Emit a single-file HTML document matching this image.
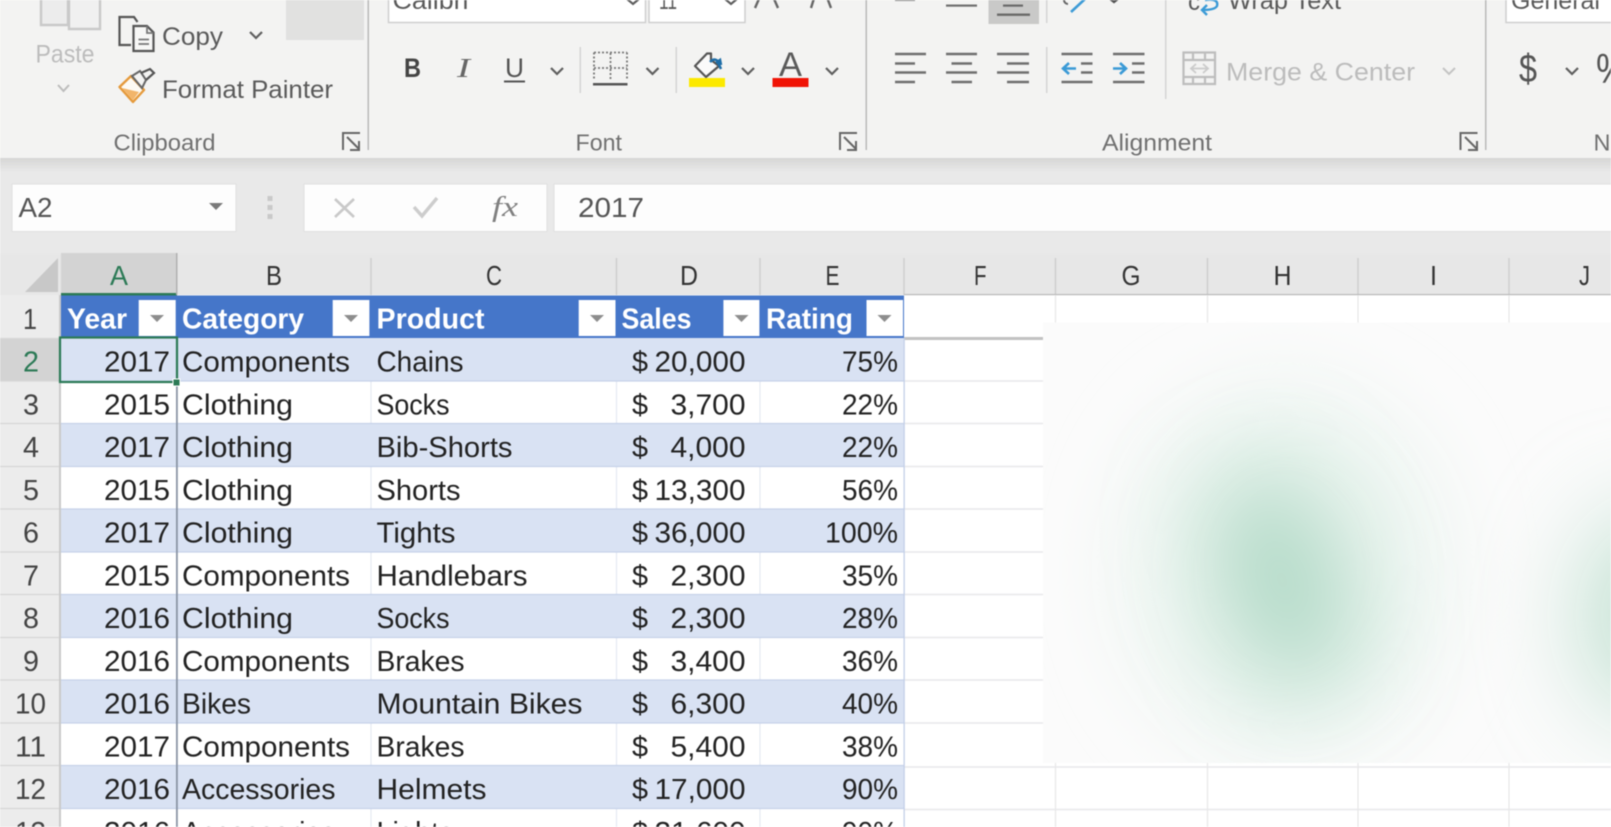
<!DOCTYPE html>
<html><head><meta charset="utf-8"><title>Excel table</title>
<style>
html,body{margin:0;padding:0;width:1611px;height:827px;overflow:hidden;background:#fff}
svg{display:block;filter:blur(.45px)}
text{font-family:"Liberation Sans",sans-serif;white-space:pre}
.c{font-size:29px;fill:#222}
.h{font-size:29px;fill:#fff;font-weight:700}
.n{font-size:28px;fill:#333}
.l{font-size:28px;fill:#333}
.r{font-size:25px;fill:#5a5a5a}
.g{font-size:23.5px;fill:#707070}
.d{font-size:25px;fill:#bcbcbc}
.ch{fill:none;stroke:#5f5f5f;stroke-width:2.2}
.ln{stroke:#6f6f6f;stroke-width:2.4}
</style></head><body>
<svg width="1611" height="827" viewBox="0 0 1611 827" xmlns="http://www.w3.org/2000/svg">
<defs>
<linearGradient id="sh" x1="0" y1="0" x2="0" y2="1"><stop offset="0" stop-color="#d6d6d5"/><stop offset="1" stop-color="#e9e9e9"/></linearGradient>
<filter id="bl1" x="-100%" y="-100%" width="300%" height="300%"><feGaussianBlur stdDeviation="48"/></filter>
<filter id="bl2" x="-100%" y="-100%" width="300%" height="300%"><feGaussianBlur stdDeviation="38"/></filter>
</defs>

<!-- ribbon -->
<rect width="1611" height="158" fill="#f3f3f2"/>
<rect y="158" width="1611" height="14" fill="url(#sh)"/>
<rect y="172" width="1611" height="82" fill="#e9e9e9"/>

<!-- paste -->
<path d="M41 0V25H68V0" fill="#ececec" stroke="#c9c9c9" stroke-width="2.4"/>
<path d="M69 0V29H100V0" fill="#f0f0f0" stroke="#c9c9c9" stroke-width="2.4"/>
<text x="35.500" y="62.500" class="d" textLength="59" lengthAdjust="spacingAndGlyphs">Paste</text>
<path d="M58 85l5.500 6 5.500-6" fill="none" stroke="#bcbcbc" stroke-width="2"/>

<!-- copy -->
<path d="M131 45H119.500V17H134l3.500 5" fill="none" stroke="#555" stroke-width="2.200"/>
<path d="M133.500 26V51H153.500V32.500L147 26Z" fill="#f7f7f6" stroke="#555" stroke-width="2.200"/>
<path d="M147 26V33H153.500M138.500 39.500H149M138.500 44H149" fill="none" stroke="#777" stroke-width="1.800"/>
<text x="162" y="45" class="r" textLength="61" lengthAdjust="spacingAndGlyphs">Copy</text>
<path class="ch" d="M250 32l6 6 6-6"/>
<rect x="286" width="78" height="40" fill="#e1e1e0"/>

<!-- format painter -->
<path d="M119.500 87L131 76L144 90L133 102Z" fill="#fdfaf3" stroke="#e59a3c" stroke-width="2.400" stroke-linejoin="round"/>
<path d="M122 88L139 92L133 100Z" fill="#f2b56a"/>
<path d="M132 76L140 71L146 80L142 88Z" fill="#f3f3f2" stroke="#666" stroke-width="2"/>
<path d="M141 73L150 69L154 73L146 80" fill="none" stroke="#555" stroke-width="2.200"/>
<text x="162" y="98" class="r" textLength="171" lengthAdjust="spacingAndGlyphs">Format Painter</text>
<text x="113.500" y="150.500" class="g" textLength="102" lengthAdjust="spacingAndGlyphs">Clipboard</text>
<path d="M343 150V133H360M347 137L359 149M359 141V150H350" fill="none" stroke="#666" stroke-width="2"/>
<rect x="367.500" width="1.500" height="150" fill="#b9b9b9"/>

<!-- font group -->
<rect x="388.500" y="-2" width="257" height="24.500" fill="#fff" stroke="#cfcfcf" stroke-width="1.500"/>
<rect x="649" y="-2" width="96" height="24.500" fill="#fff" stroke="#cfcfcf" stroke-width="1.500"/>
<text x="392.500" y="9" class="r" textLength="76" lengthAdjust="spacingAndGlyphs">Calibri</text>
<text x="659" y="9" class="r" textLength="18" lengthAdjust="spacingAndGlyphs">11</text>
<path class="ch" d="M627 -1l6 5 6-5M725 -1l6 5 6-5"/>
<path d="M755 8L762 -8M771 -8L778 8M811 8L816 -8M825 -8L831 8" fill="none" stroke="#666" stroke-width="2.400"/>
<text x="404" y="77" style="font-size:27px;font-weight:700;fill:#444" textLength="17" lengthAdjust="spacingAndGlyphs">B</text>
<text x="457" y="77" style="font-size:27px;font-style:italic;font-family:'Liberation Serif',serif;fill:#666" textLength="13" lengthAdjust="spacingAndGlyphs">I</text>
<text x="505" y="77" style="font-size:27px;fill:#555" textLength="19" lengthAdjust="spacingAndGlyphs">U</text>
<rect x="504" y="80.500" width="21" height="2" fill="#555"/>
<path class="ch" d="M551 68l6 6 6-6M646.500 68l6 6 6-6M742 68l6 6 6-6M826 68l6 6 6-6"/>
<rect x="579.500" y="47" width="1.500" height="46" fill="#d4d4d4"/>
<rect x="675.500" y="47" width="1.500" height="46" fill="#d4d4d4"/>
<!-- borders -->
<path d="M594 52.500H627M594 52.500V80M627 52.500V80M610.500 53V80M594 68H627" fill="none" stroke="#777" stroke-width="1.800" stroke-dasharray="2 2"/>
<rect x="593" y="83" width="34.500" height="2.500" fill="#555"/>
<!-- fill colour -->
<path d="M695 66L707 53.500L711 53.500L711 60L719 66L706 77Z" fill="#fafafa" stroke="#555" stroke-width="2.200" stroke-linejoin="round"/>
<path d="M710 62Q714 58 717 60.500L721 69M716 63l4 -3 1 5" fill="none" stroke="#1f6ea8" stroke-width="2.600"/>
<rect x="689" y="78" width="36" height="9" fill="#fce900"/>
<text x="779" y="76" style="font-size:34px;fill:#5a5a5a" textLength="23" lengthAdjust="spacingAndGlyphs">A</text>
<rect x="772.500" y="78" width="36" height="9" fill="#f01305"/>
<text x="575.500" y="150.500" class="g" textLength="46.500" lengthAdjust="spacingAndGlyphs">Font</text>
<path d="M840 150V133H857M844 137L856 149M856 141V150H847" fill="none" stroke="#666" stroke-width="2"/>
<rect x="865.500" width="1.500" height="150" fill="#b9b9b9"/>

<!-- alignment top -->
<rect x="895" y="-1" width="20" height="2" fill="#888"/>
<rect x="946" y="4.500" width="31" height="2.200" fill="#6f6f6f"/>
<rect x="988.500" y="-2" width="50.500" height="26" fill="#c9c9c8"/>
<rect x="1003" y="4.500" width="20" height="2.200" fill="#6a6a6a"/>
<rect x="997" y="13.500" width="33" height="2.400" fill="#6a6a6a"/>
<rect x="1046" y="0" width="1.500" height="23" fill="#d4d4d4"/>
<path d="M1071 12L1085 -1" stroke="#3d9bd6" stroke-width="2.600" fill="none"/>
<path d="M1064 0a4 4 0 0 0 4 4" stroke="#666" stroke-width="2" fill="none"/>
<path d="M1109 -2l5 4 5-4" fill="none" stroke="#555" stroke-width="2.400"/>

<!-- align lines -->
<path class="ln" d="M895 54H926M895 63.500H915M895 72.500H926M895 82H915M946 54H977M951.500 63.500H972M946 72.500H977M951.500 82H972M997 54H1029M1007 63.500H1029M997 72.500H1029M1007 82H1029"/>
<rect x="1046" y="47" width="1.500" height="46" fill="#d4d4d4"/>
<path class="ln" d="M1061.500 54H1092.500M1081 63.500H1092.500M1081 72.500H1092.500M1061.500 82H1092.500M1113 54H1144.500M1132 63.500H1144.500M1132 72.500H1144.500M1113 82H1144.500"/>
<path d="M1076 68.500H1063M1069 63l-6 5.500 6 5.500M1113 68.500H1126M1120 63l6 5.500-6 5.500" fill="none" stroke="#3a9ad6" stroke-width="2.600"/>
<rect x="1165" width="1.500" height="99" fill="#d4d4d4"/>
<text x="1188" y="10" class="r" textLength="12" lengthAdjust="spacingAndGlyphs">c</text>
<path d="M1205 0Q1219 -2 1217 6Q1215 10 1202 10M1207 5l-5 5 5 5" fill="none" stroke="#3a9ad6" stroke-width="2.400"/>
<text x="1228" y="9" class="r" textLength="113" lengthAdjust="spacingAndGlyphs">Wrap Text</text>
<!-- merge -->
<path d="M1183.500 52.500H1215V84H1183.500ZM1184 60H1215M1184 77H1215M1193 53V60M1205 53V60M1193 77V84M1205 77V84" fill="none" stroke="#bdbdbd" stroke-width="2.200"/>
<path d="M1192 68.500H1207M1196 64l-5 4.500 5 4.500M1203 64l5 4.500-5 4.500" fill="none" stroke="#cbcbcb" stroke-width="1.800"/>
<text x="1226" y="80.500" class="d" textLength="189" lengthAdjust="spacingAndGlyphs">Merge &amp; Center</text>
<path d="M1443 68l6 6 6-6" fill="none" stroke="#c4c4c4" stroke-width="2"/>
<text x="1102" y="150.500" class="g" textLength="110" lengthAdjust="spacingAndGlyphs">Alignment</text>
<path d="M1460.500 150V133H1477.500M1465 137L1477 149M1477 141V150H1468" fill="none" stroke="#666" stroke-width="2"/>
<rect x="1485" width="1.500" height="150" fill="#b9b9b9"/>

<!-- number group -->
<rect x="1506" y="-2" width="110" height="24.500" fill="#fff" stroke="#cfcfcf" stroke-width="1.500"/>
<text x="1511" y="9" class="r" textLength="89" lengthAdjust="spacingAndGlyphs">General</text>
<text x="1519" y="82" style="font-size:40px;fill:#555" textLength="18" lengthAdjust="spacingAndGlyphs">$</text>
<path class="ch" d="M1566 68l6 6 6-6"/>
<text x="1596" y="83" style="font-size:42px;fill:#555" textLength="32" lengthAdjust="spacingAndGlyphs">%</text>
<text x="1593.500" y="150.500" class="g">N</text>

<!-- formula bar -->
<rect x="12" y="184" width="224" height="47.500" fill="#fdfdfd" stroke="#e0e0e0"/>
<text x="18.500" y="217" class="l" style="fill:#555" textLength="34" lengthAdjust="spacingAndGlyphs">A2</text>
<path d="M209 203H223L216 210Z" fill="#7a7a7a"/>
<rect x="267.500" y="196" width="5" height="5" fill="#c9c9c9"/><rect x="267.500" y="205" width="5" height="5" fill="#c9c9c9"/><rect x="267.500" y="214" width="5" height="5" fill="#c9c9c9"/>
<rect x="304" y="184" width="243" height="47.500" fill="#fdfdfd" stroke="#e0e0e0"/>
<path d="M335 199L354 217M354 199L335 217" stroke="#c9c9c9" stroke-width="2.600" fill="none"/>
<path d="M414 207L422 216L437 198" stroke="#cdcdcd" stroke-width="3.400" fill="none"/>
<text x="492" y="216" style="font-size:29px;font-style:italic;font-family:'Liberation Serif',serif;fill:#808080" textLength="26" lengthAdjust="spacingAndGlyphs">fx</text>
<rect x="554" y="184" width="1070" height="47.500" fill="#fdfdfd" stroke="#e0e0e0"/>
<text x="578" y="217" class="l" style="fill:#555" textLength="66" lengthAdjust="spacingAndGlyphs">2017</text>

<!-- col headers -->
<rect y="254" width="1611" height="41" fill="#e7e7e7"/>
<path d="M25 292H58V258Z" fill="#c8c8c8"/>
<rect x="61" y="253" width="116" height="41" fill="#d3d3d3"/>
<rect x="61" y="293" width="116" height="2.500" fill="#2c7a56"/>
<path d="M371 258V295M616.500 258V295M760 258V295M904 258V295M1055.500 258V295M1207.500 258V295M1358 258V295M1509 258V295" stroke="#cbcbcb" stroke-width="1.300" fill="none"/>
<rect x="176" y="253" width="1.500" height="42" fill="#b0b0b0"/>
<rect y="294" x="904" width="707" height="1.200" fill="#b8b8b8"/>
<text x="110" y="285" class="n" style="fill:#2c7a56" textLength="18" lengthAdjust="spacingAndGlyphs">A</text>
<text x="266" y="285" class="n" textLength="16" lengthAdjust="spacingAndGlyphs">B</text>
<text x="486" y="285" class="n" textLength="16" lengthAdjust="spacingAndGlyphs">C</text>
<text x="680" y="285" class="n" textLength="18" lengthAdjust="spacingAndGlyphs">D</text>
<text x="825.500" y="285" class="n" textLength="14" lengthAdjust="spacingAndGlyphs">E</text>
<text x="974" y="285" class="n" textLength="12.500" lengthAdjust="spacingAndGlyphs">F</text>
<text x="1121.500" y="285" class="n" textLength="19" lengthAdjust="spacingAndGlyphs">G</text>
<text x="1273.500" y="285" class="n" textLength="18" lengthAdjust="spacingAndGlyphs">H</text>
<text x="1430" y="285" class="n" textLength="7" lengthAdjust="spacingAndGlyphs">I</text>
<text x="1579" y="285" class="n" textLength="11" lengthAdjust="spacingAndGlyphs">J</text>

<!-- row headers -->
<rect y="295" width="61" height="532" fill="#ececec"/>
<rect y="338" width="61" height="43" fill="#d3d3d3"/>
<path d="M0 338.500H61M0 381H61M0 423.500H61M0 466.500H61M0 509H61M0 552H61M0 594.500H61M0 637.500H61M0 680H61M0 723H61M0 765.500H61M0 808.500H61" stroke="#d6d6d6" stroke-width="1.300"/>
<rect x="59" y="295" width="2" height="532" fill="#cacaca"/>
<g class="c" style="fill:#444">
<text x="23" y="329" textLength="14" lengthAdjust="spacingAndGlyphs">1</text>
<text x="23" y="371.500" style="fill:#2c7a56" textLength="16" lengthAdjust="spacingAndGlyphs">2</text>
<text x="23" y="414.250" textLength="16" lengthAdjust="spacingAndGlyphs">3</text>
<text x="23" y="457" textLength="16" lengthAdjust="spacingAndGlyphs">4</text>
<text x="23" y="499.750" textLength="16" lengthAdjust="spacingAndGlyphs">5</text>
<text x="23" y="542.500" textLength="16" lengthAdjust="spacingAndGlyphs">6</text>
<text x="23" y="585.250" textLength="16" lengthAdjust="spacingAndGlyphs">7</text>
<text x="23" y="628" textLength="16" lengthAdjust="spacingAndGlyphs">8</text>
<text x="23" y="670.750" textLength="16" lengthAdjust="spacingAndGlyphs">9</text>
<text x="15" y="713.500" textLength="31" lengthAdjust="spacingAndGlyphs">10</text>
<text x="15" y="756.250" textLength="31" lengthAdjust="spacingAndGlyphs">11</text>
<text x="15" y="799" textLength="31" lengthAdjust="spacingAndGlyphs">12</text>
<text x="15" y="841.750" textLength="31" lengthAdjust="spacingAndGlyphs">13</text>
</g>

<!-- grid -->
<path d="M371 338V827M616.500 338V827M760 338V827" stroke="#e6eaf3" stroke-width="1.300"/>
<path d="M1055.500 295V827M1207.500 295V827M1358 295V827M1509 295V827" stroke="#e8e8e8" stroke-width="1.300"/>
<path d="M904 381H1611M904 423.500H1611M904 466.500H1611M904 509H1611M904 552H1611M904 594.500H1611M904 637.500H1611M904 680H1611M904 723H1611M904 767H1611M904 809.500H1611" stroke="#e8e8ea" stroke-width="1.500"/>
<rect x="904" y="337" width="707" height="3" fill="#c2c2c2"/>

<!-- table bands -->
<g fill="#d9e2f3">
<rect x="61" y="338" width="843" height="42.750"/>
<rect x="61" y="423.500" width="843" height="42.750"/>
<rect x="61" y="509" width="843" height="42.750"/>
<rect x="61" y="594.500" width="843" height="42.750"/>
<rect x="61" y="680" width="843" height="42.750"/>
<rect x="61" y="765.500" width="843" height="42.750"/>
</g>
<path d="M61 381H904M61 423.500H904M61 466.500H904M61 509H904M61 552H904M61 594.500H904M61 637.500H904M61 680H904M61 723H904M61 765.500H904M61 808.500H904" stroke="#c6d2e9" stroke-width="1.300"/>
<rect x="61" y="295.500" width="843" height="42.500" fill="#4576c9"/>
<rect x="903.500" y="338" width="1.300" height="489" fill="#c3cfe8"/>
<rect x="176" y="338" width="1.800" height="489" fill="#8b95a5"/>

<!-- header -->
<text x="67" y="328.500" class="h" textLength="60" lengthAdjust="spacingAndGlyphs">Year</text>
<text x="182" y="328.500" class="h" textLength="122" lengthAdjust="spacingAndGlyphs">Category</text>
<text x="376.500" y="328.500" class="h" textLength="108" lengthAdjust="spacingAndGlyphs">Product</text>
<text x="621.500" y="328.500" class="h" textLength="70" lengthAdjust="spacingAndGlyphs">Sales</text>
<text x="766" y="328.500" class="h" textLength="87" lengthAdjust="spacingAndGlyphs">Rating</text>
<g fill="#fff">
<rect x="138.700" y="300" width="37" height="36"/><rect x="332.700" y="300" width="36.700" height="36"/><rect x="578.700" y="300" width="36.800" height="36"/><rect x="723.400" y="300" width="36" height="36"/><rect x="866.500" y="300" width="36.500" height="36"/>
</g>
<g fill="#8d8d8d">
<path d="M150 315H164L157 322Z"/><path d="M344 315H358L351 322Z"/><path d="M590 315H604L597 322Z"/><path d="M734.500 315H748.500L741.500 322Z"/><path d="M877.500 315H891.500L884.500 322Z"/>
</g>

<!-- cells -->
<g class="c">
<text x="104" y="371.500" textLength="66" lengthAdjust="spacingAndGlyphs">2017</text><text x="182" y="371.500" textLength="168" lengthAdjust="spacingAndGlyphs">Components</text><text x="376.500" y="371.500" textLength="87" lengthAdjust="spacingAndGlyphs">Chains</text><text x="632" y="371.500" textLength="16" lengthAdjust="spacingAndGlyphs">$</text><text x="654.500" y="371.500" textLength="91" lengthAdjust="spacingAndGlyphs">20,000</text><text x="842" y="371.500" textLength="56" lengthAdjust="spacingAndGlyphs">75%</text>
<text x="104" y="414.250" textLength="66" lengthAdjust="spacingAndGlyphs">2015</text><text x="182" y="414.250" textLength="111" lengthAdjust="spacingAndGlyphs">Clothing</text><text x="376.500" y="414.250" textLength="73" lengthAdjust="spacingAndGlyphs">Socks</text><text x="632" y="414.250" textLength="16" lengthAdjust="spacingAndGlyphs">$</text><text x="670.500" y="414.250" textLength="75" lengthAdjust="spacingAndGlyphs">3,700</text><text x="842" y="414.250" textLength="56" lengthAdjust="spacingAndGlyphs">22%</text>
<text x="104" y="457" textLength="66" lengthAdjust="spacingAndGlyphs">2017</text><text x="182" y="457" textLength="111" lengthAdjust="spacingAndGlyphs">Clothing</text><text x="376.500" y="457" textLength="136" lengthAdjust="spacingAndGlyphs">Bib-Shorts</text><text x="632" y="457" textLength="16" lengthAdjust="spacingAndGlyphs">$</text><text x="670.500" y="457" textLength="75" lengthAdjust="spacingAndGlyphs">4,000</text><text x="842" y="457" textLength="56" lengthAdjust="spacingAndGlyphs">22%</text>
<text x="104" y="499.750" textLength="66" lengthAdjust="spacingAndGlyphs">2015</text><text x="182" y="499.750" textLength="111" lengthAdjust="spacingAndGlyphs">Clothing</text><text x="376.500" y="499.750" textLength="84" lengthAdjust="spacingAndGlyphs">Shorts</text><text x="632" y="499.750" textLength="16" lengthAdjust="spacingAndGlyphs">$</text><text x="654.500" y="499.750" textLength="91" lengthAdjust="spacingAndGlyphs">13,300</text><text x="842" y="499.750" textLength="56" lengthAdjust="spacingAndGlyphs">56%</text>
<text x="104" y="542.500" textLength="66" lengthAdjust="spacingAndGlyphs">2017</text><text x="182" y="542.500" textLength="111" lengthAdjust="spacingAndGlyphs">Clothing</text><text x="376.500" y="542.500" textLength="79" lengthAdjust="spacingAndGlyphs">Tights</text><text x="632" y="542.500" textLength="16" lengthAdjust="spacingAndGlyphs">$</text><text x="654.500" y="542.500" textLength="91" lengthAdjust="spacingAndGlyphs">36,000</text><text x="825" y="542.500" textLength="73" lengthAdjust="spacingAndGlyphs">100%</text>
<text x="104" y="585.250" textLength="66" lengthAdjust="spacingAndGlyphs">2015</text><text x="182" y="585.250" textLength="168" lengthAdjust="spacingAndGlyphs">Components</text><text x="376.500" y="585.250" textLength="151" lengthAdjust="spacingAndGlyphs">Handlebars</text><text x="632" y="585.250" textLength="16" lengthAdjust="spacingAndGlyphs">$</text><text x="670.500" y="585.250" textLength="75" lengthAdjust="spacingAndGlyphs">2,300</text><text x="842" y="585.250" textLength="56" lengthAdjust="spacingAndGlyphs">35%</text>
<text x="104" y="628" textLength="66" lengthAdjust="spacingAndGlyphs">2016</text><text x="182" y="628" textLength="111" lengthAdjust="spacingAndGlyphs">Clothing</text><text x="376.500" y="628" textLength="73" lengthAdjust="spacingAndGlyphs">Socks</text><text x="632" y="628" textLength="16" lengthAdjust="spacingAndGlyphs">$</text><text x="670.500" y="628" textLength="75" lengthAdjust="spacingAndGlyphs">2,300</text><text x="842" y="628" textLength="56" lengthAdjust="spacingAndGlyphs">28%</text>
<text x="104" y="670.750" textLength="66" lengthAdjust="spacingAndGlyphs">2016</text><text x="182" y="670.750" textLength="168" lengthAdjust="spacingAndGlyphs">Components</text><text x="376.500" y="670.750" textLength="88" lengthAdjust="spacingAndGlyphs">Brakes</text><text x="632" y="670.750" textLength="16" lengthAdjust="spacingAndGlyphs">$</text><text x="670.500" y="670.750" textLength="75" lengthAdjust="spacingAndGlyphs">3,400</text><text x="842" y="670.750" textLength="56" lengthAdjust="spacingAndGlyphs">36%</text>
<text x="104" y="713.500" textLength="66" lengthAdjust="spacingAndGlyphs">2016</text><text x="182" y="713.500" textLength="69" lengthAdjust="spacingAndGlyphs">Bikes</text><text x="376.500" y="713.500" textLength="206" lengthAdjust="spacingAndGlyphs">Mountain Bikes</text><text x="632" y="713.500" textLength="16" lengthAdjust="spacingAndGlyphs">$</text><text x="670.500" y="713.500" textLength="75" lengthAdjust="spacingAndGlyphs">6,300</text><text x="842" y="713.500" textLength="56" lengthAdjust="spacingAndGlyphs">40%</text>
<text x="104" y="756.250" textLength="66" lengthAdjust="spacingAndGlyphs">2017</text><text x="182" y="756.250" textLength="168" lengthAdjust="spacingAndGlyphs">Components</text><text x="376.500" y="756.250" textLength="88" lengthAdjust="spacingAndGlyphs">Brakes</text><text x="632" y="756.250" textLength="16" lengthAdjust="spacingAndGlyphs">$</text><text x="670.500" y="756.250" textLength="75" lengthAdjust="spacingAndGlyphs">5,400</text><text x="842" y="756.250" textLength="56" lengthAdjust="spacingAndGlyphs">38%</text>
<text x="104" y="799" textLength="66" lengthAdjust="spacingAndGlyphs">2016</text><text x="182" y="799" textLength="153.500" lengthAdjust="spacingAndGlyphs">Accessories</text><text x="376.500" y="799" textLength="110" lengthAdjust="spacingAndGlyphs">Helmets</text><text x="632" y="799" textLength="16" lengthAdjust="spacingAndGlyphs">$</text><text x="654.500" y="799" textLength="91" lengthAdjust="spacingAndGlyphs">17,000</text><text x="842" y="799" textLength="56" lengthAdjust="spacingAndGlyphs">90%</text>
<text x="104" y="841.750" textLength="66" lengthAdjust="spacingAndGlyphs">2016</text><text x="182" y="841.750" textLength="153.500" lengthAdjust="spacingAndGlyphs">Accessories</text><text x="376.500" y="841.750" textLength="77" lengthAdjust="spacingAndGlyphs">Lights</text><text x="632" y="841.750" textLength="16" lengthAdjust="spacingAndGlyphs">$</text><text x="654.500" y="841.750" textLength="91" lengthAdjust="spacingAndGlyphs">21,600</text><text x="842" y="841.750" textLength="56" lengthAdjust="spacingAndGlyphs">90%</text>
</g>

<!-- selection -->
<rect x="60" y="337.500" width="117" height="44.500" fill="none" stroke="#2c7a56" stroke-width="2.200"/>
<rect x="173" y="379" width="7" height="7" fill="#2c7a56" stroke="#fff" stroke-width="1"/>

<!-- blurred panel -->
<rect x="1043" y="322.500" width="568" height="440.500" fill="#fbfbfb"/>
<svg x="1043" y="322.500" width="568" height="440.500" viewBox="1043 322.500 568 440.500">
<ellipse cx="1285" cy="570" rx="165" ry="185" fill="#edf5f1" filter="url(#bl2)"/>
<ellipse cx="1282" cy="580" rx="62" ry="115" fill="#aed8c4" transform="rotate(-17 1282 580)" filter="url(#bl1)"/>
<ellipse cx="1650" cy="615" rx="70" ry="105" fill="#c2e1d2" filter="url(#bl1)"/>
</svg>
</svg>
</body></html>
